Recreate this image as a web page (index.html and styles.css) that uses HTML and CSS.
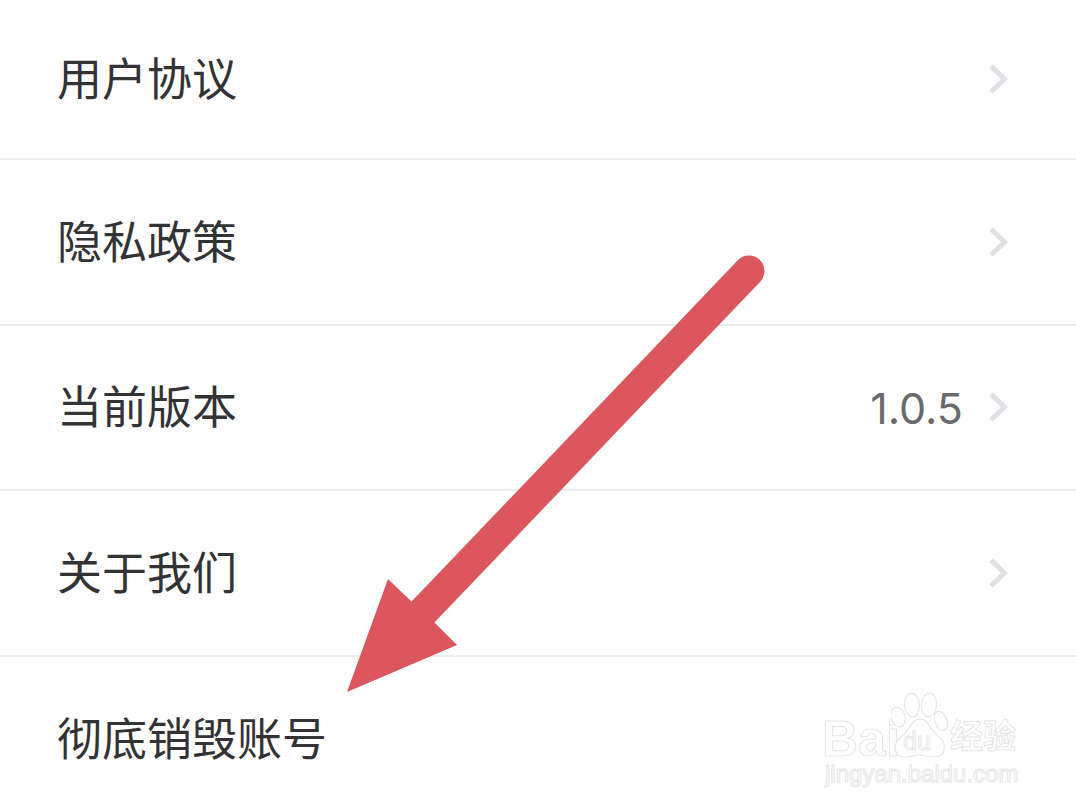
FILE: index.html
```html
<!DOCTYPE html>
<html lang="zh-CN">
<head>
<meta charset="utf-8">
<title>设置</title>
<link rel="stylesheet" href="styles.css">
</head>
<body>
<main class="screen">
  <div class="row row-first"><span class="label">用户协议</span><span class="side"><svg class="chev" viewBox="0 0 20 32"><path d="M3 3 L16.500 16 L3 29"/></svg></span></div>
  <div class="row"><span class="label">隐私政策</span><span class="side"><svg class="chev" viewBox="0 0 20 32"><path d="M3 3 L16.500 16 L3 29"/></svg></span></div>
  <div class="row"><span class="label">当前版本</span><span class="side"><span class="value">1.0.5</span><svg class="chev" viewBox="0 0 20 32"><path d="M3 3 L16.500 16 L3 29"/></svg></span></div>
  <div class="row"><span class="label">关于我们</span><span class="side"><svg class="chev" viewBox="0 0 20 32"><path d="M3 3 L16.500 16 L3 29"/></svg></span></div>
  <div class="row row-last"><span class="label">彻底销毁账号</span></div>

  <svg class="arrow" viewBox="0 0 1076 808">
    <path class="shaft" d="M749 271 L423 612"/>
    <polygon class="head" points="347,692 388,579 413,603 433,621 457,645"/>
  </svg>

  <div class="mark">
    <div class="mark-top">
      <span class="mark-bai">Bai</span>
      <svg class="paw" viewBox="0 0 60 70">
        <g class="paw-line">
          <ellipse cx="7" cy="25" rx="7" ry="10" transform="rotate(-15 7 25)"/>
          <ellipse cx="21" cy="13" rx="7.500" ry="12" transform="rotate(-5 21 13)"/>
          <ellipse cx="38" cy="13" rx="7.500" ry="12" transform="rotate(5 38 13)"/>
          <ellipse cx="50" cy="29" rx="6" ry="10" transform="rotate(-20 50 29)"/>
          <path d="M29 27 C38 27 38 37 47 44 C57 51 55 65 43 65 C35 65 33 63 29 63 C25 63 20 65 13 65 C3 65 1 52 10 45 C19 38 20 27 29 27 Z"/>
        </g>
      </svg>
      <span class="mark-du">du</span>
      <span class="mark-cn">经验</span>
    </div>
    <div class="mark-url">jingyan.baidu.com</div>
  </div>
</main>
</body>
</html>
```
FILE: styles.css
```css
* { box-sizing: border-box; }
html, body { margin: 0; padding: 0; background: #fff; }
.screen {
  position: relative;
  width: 1076px;
  height: 808px;
  overflow: hidden;
  background: #fff;
  font-family: "Noto Sans CJK SC", "Noto Sans", sans-serif;
}
.row {
  height: 165.5px;
  padding: 0 68px 0 57px;
  display: flex;
  align-items: center;
  justify-content: space-between;
  border-bottom: 2px solid #ebebee;
}
.row-first { height: 160px; }
.row-last { border-bottom: none; }
.label {
  font-size: 45px;
  font-weight: 400;
  line-height: 1;
  margin-bottom: 5px;
  color: #333335;
}
.side { display: flex; align-items: center; gap: 25px; }
.value {
  font-family: Inter, "Liberation Sans", sans-serif;
  font-size: 43px;
  font-weight: 400;
  line-height: 1;
  margin-top: 2px;
  color: #6a6a6c;
}
.chev { width: 20px; height: 32px; display: block; }
.chev path {
  fill: none;
  stroke: #dfe0e6;
  stroke-width: 5;
  stroke-linejoin: miter;
}
.arrow { position: absolute; inset: 0; width: 1076px; height: 808px; }
.shaft { stroke: #dc565e; stroke-width: 31; stroke-linecap: round; fill: none; }
.head { fill: #dc565e; }

.mark {
  position: absolute;
  left: 825px;
  top: 692px;
  width: 200px;
  color: #fff;
  -webkit-text-stroke: 1px #e6e6e6;
}
.mark-top { position: relative; height: 69px; }
.mark-bai {
  position: absolute;
  left: -3px;
  top: 25px;
  font-family: "Liberation Sans", sans-serif;
  font-size: 50px;
  font-weight: 700;
  line-height: 0.88;
}
.paw { position: absolute; left: 66px; top: 0; width: 60px; height: 70px; }
.paw-line ellipse, .paw-line path { fill: #fff; stroke: #e6e6e6; stroke-width: 1.200; }
.mark-du {
  position: absolute;
  left: 78px;
  top: 37px;
  font-family: "Liberation Sans", sans-serif;
  font-size: 25px;
  line-height: 1;
}
.mark-cn {
  position: absolute;
  left: 125px;
  top: 26px;
  font-size: 33px;
  font-weight: 700;
  line-height: 1;
}
.mark-url {
  font-family: "Liberation Sans", sans-serif;
  font-size: 24px;
  line-height: 1.100;
  white-space: nowrap;
}
```
